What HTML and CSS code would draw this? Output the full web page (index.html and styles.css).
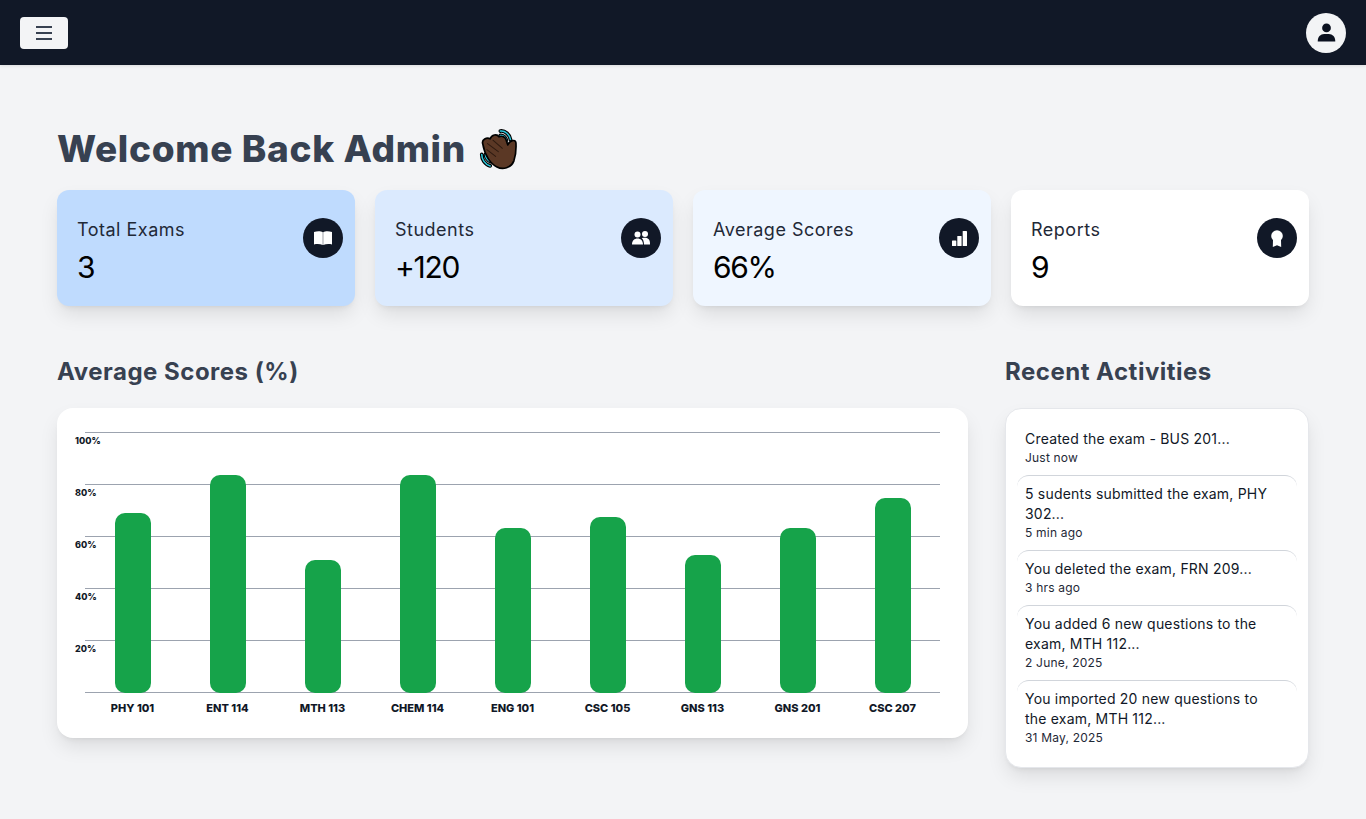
FILE: index.html
```html
<!DOCTYPE html>
<html lang="en">
<head>
<meta charset="utf-8">
<title>Dashboard</title>
<link rel="stylesheet" href="styles.css">
</head>
<body>
<header class="topbar">
  <button class="menu-btn" aria-label="Menu">
    <svg class="menu-icon" viewBox="0 0 16 14"><path d="M0 1h16M0 7h16M0 13h16"/></svg>
  </button>
  <div class="avatar">
    <svg class="avatar-icon" viewBox="0 0 20 20"><circle cx="10" cy="5.200" r="4.600"/><path d="M.8 19.500c-.3-5 3-8 6.700-8h5c3.700 0 7 3 6.700 8z"/></svg>
  </div>
</header>
<main class="page">
  <h1 class="welcome">Welcome Back Admin
    <svg class="wave" viewBox="55 25 115 130">
      <g fill="none" stroke-linecap="round">
        <path class="wave-o" d="M118 37C132 35 146 48 148 62M118 50C126 49 134 56 136 64M63 106C63 120 72 136 88 140M74 106C74 114 80 124 88 127"/>
        <path class="wave-c" d="M118 37C132 35 146 48 148 62M118 50C126 49 134 56 136 64M63 106C63 120 72 136 88 140M74 106C74 114 80 124 88 127"/>
      </g>
      <path class="wave-hand" d="M66 75C62 62 78 54 88 60C92 48 108 44 114 54C122 50 134 54 136 66L140 78C146 64 162 60 164 72C165 90 163 110 158 125C150 146 125 152 108 143C90 135 72 110 66 75Z"/>
      <path class="wave-line" d="M80 74L112 98M96 64L124 88M78 92L104 112"/>
    </svg>
  </h1>
  <section class="stats">
    <article class="stat stat-a">
      <div><p class="stat-label">Total Exams</p><p class="stat-value">3</p></div>
      <span class="stat-icon"><svg class="ico-book" viewBox="0 0 18 14"><path d="M0 1C3 0 6.800 0 8.800 1.200V14C6 12.800 3 12.800 0 13.400ZM18 1C15 0 11.200 0 9.200 1.200V14C12 12.800 15 12.800 18 13.400Z"/></svg></span>
    </article>
    <article class="stat stat-b">
      <div><p class="stat-label">Students</p><p class="stat-value">+120</p></div>
      <span class="stat-icon"><svg class="ico-users" viewBox="0 0 18 14"><circle cx="5.500" cy="3.500" r="3"/><circle cx="13" cy="3" r="3"/><path d="M0 13.500C0 9.500 2.500 7.500 5.500 7.500S11 9.500 11 13.500ZM12 13.500C12 10.500 11.200 8.500 9.800 7.300C11 6.700 15 6.200 17 8.500C18 10 18 12 18 13.500Z"/></svg></span>
    </article>
    <article class="stat stat-c">
      <div><p class="stat-label">Average Scores</p><p class="stat-value">66%</p></div>
      <span class="stat-icon"><svg class="ico-bars" viewBox="0 0 15 15"><rect y="9.500" width="4.300" height="5.500" rx=".6"/><rect x="5.300" y="5" width="4.300" height="10" rx=".6"/><rect x="10.700" width="4.300" height="15" rx=".6"/></svg></span>
    </article>
    <article class="stat stat-d">
      <div><p class="stat-label">Reports</p><p class="stat-value">9</p></div>
      <span class="stat-icon"><svg class="ico-award" viewBox="0 0 12 17"><circle cx="6" cy="6" r="5.800"/><path d="M2 10L1.800 17L6 15.200L10.200 17L10 10Z"/></svg></span>
    </article>
  </section>
  <section class="lower">
    <div class="scores">
      <h2 class="section-title">Average Scores (%)</h2>
      <div class="chart-card">
        <div class="plot">
          <div class="grid">
            <div class="grid-row"><span>100%</span></div>
            <div class="grid-row"><span>80%</span></div>
            <div class="grid-row"><span>60%</span></div>
            <div class="grid-row"><span>40%</span></div>
            <div class="grid-row"><span>20%</span></div>
          </div>
          <div class="bars">
            <div class="bar-col"><div class="bar" style="height:180px"></div></div>
            <div class="bar-col"><div class="bar" style="height:218px"></div></div>
            <div class="bar-col"><div class="bar" style="height:133px"></div></div>
            <div class="bar-col"><div class="bar" style="height:218px"></div></div>
            <div class="bar-col"><div class="bar" style="height:165px"></div></div>
            <div class="bar-col"><div class="bar" style="height:176px"></div></div>
            <div class="bar-col"><div class="bar" style="height:138px"></div></div>
            <div class="bar-col"><div class="bar" style="height:165px"></div></div>
            <div class="bar-col"><div class="bar" style="height:195px"></div></div>
          </div>
        </div>
        <div class="x-labels">
          <span>PHY 101</span><span>ENT 114</span><span>MTH 113</span><span>CHEM 114</span><span>ENG 101</span><span>CSC 105</span><span>GNS 113</span><span>GNS 201</span><span>CSC 207</span>
        </div>
      </div>
    </div>
    <aside class="recent">
      <h2 class="section-title">Recent Activities</h2>
      <div class="activity-card">
        <div class="activity first"><p class="activity-text">Created the exam - BUS 201...</p><p class="activity-time">Just now</p></div>
        <div class="activity"><p class="activity-text">5 sudents submitted the exam, PHY 302...</p><p class="activity-time">5 min ago</p></div>
        <div class="activity"><p class="activity-text">You deleted the exam, FRN 209...</p><p class="activity-time">3 hrs ago</p></div>
        <div class="activity"><p class="activity-text">You added 6 new questions to the exam, MTH 112...</p><p class="activity-time">2 June, 2025</p></div>
        <div class="activity"><p class="activity-text">You imported 20 new questions to the exam, MTH 112...</p><p class="activity-time">31 May, 2025</p></div>
      </div>
    </aside>
  </section>
</main>
</body>
</html>
```
FILE: styles.css
```css
* { box-sizing: border-box; }
html, body { margin: 0; padding: 0; }
body {
  background: #f3f4f6;
  font-family: "Inter", "Open Sans", sans-serif;
  color: #111827;
  height: 819px;
  overflow: hidden;
}
p, h1, h2 { margin: 0; }

.topbar {
  height: 65px;
  background: #111827;
  display: flex;
  align-items: center;
  justify-content: space-between;
  padding: 0 20px;
  box-shadow: 0 1px 3px rgba(0,0,0,.1);
}
.menu-btn {
  width: 48px;
  height: 32px;
  border: 0;
  padding: 0;
  border-radius: 4px;
  background: #f3f4f6;
  display: flex;
  align-items: center;
  justify-content: center;
}
.menu-icon { width: 16px; height: 14px; fill: none; stroke: #374151; stroke-width: 2; }
.avatar {
  width: 40px;
  height: 40px;
  border-radius: 50%;
  background: #f3f4f6;
  display: flex;
  align-items: center;
  justify-content: center;
}
.avatar-icon { width: 19px; height: 19px; fill: #0b1120; }

.page { padding: 64px 57px 0; }
.welcome {
  height: 40px;
  font-size: 37px;
  line-height: 40px;
  font-weight: 800;
  color: #374151;
  display: flex;
  align-items: center;
  gap: 13px;
  margin-bottom: 21px;
  letter-spacing: 0.65px;
}
.wave { width: 39px; height: 44px; flex: none; }
.wave-o { stroke: #000; stroke-width: 11; }
.wave-c { stroke: #2cc9de; stroke-width: 4.500; }
.wave-hand { fill: #5b3825; stroke: #000; stroke-width: 5; stroke-linejoin: round; }
.wave-line { fill: none; stroke: #2e1a10; stroke-width: 3; stroke-linecap: round; }

.stats { display: grid; grid-template-columns: repeat(4, 1fr); gap: 20px; }
.stat {
  height: 116px;
  border-radius: 12px;
  padding: 28px 12px 0 20px;
  display: flex;
  justify-content: space-between;
  align-items: flex-start;
  box-shadow: 0 10px 20px -2px rgba(0,0,0,.1), 0 4px 6px -4px rgba(0,0,0,.1);
}
.stat-a { background: #bfdbfe; }
.stat-b { background: #dbeafe; }
.stat-c { background: #eff6ff; }
.stat-d { background: #fff; }
.stat-label { font-size: 18px; line-height: 24px; color: #1f2937; letter-spacing: .5px; }
.stat-value { font-size: 30px; line-height: 40px; margin-top: 5px; color: #000; letter-spacing: -1.300px; }
.stat-icon {
  width: 40px;
  height: 40px;
  border-radius: 50%;
  background: #111827;
  display: flex;
  align-items: center;
  justify-content: center;
  flex: none;
}
.stat-icon svg { fill: #fff; }
.ico-book { width: 18px; height: 14px; }
.ico-users { width: 18px; height: 14px; }
.ico-bars { width: 15px; height: 15px; }
.ico-award { width: 12px; height: 17px; }

.lower { display: flex; justify-content: space-between; margin-top: 49px; }
.scores { width: 911px; }
.recent { width: 304px; }
.section-title {
  font-size: 24px;
  line-height: 34px;
  font-weight: 700;
  color: #374151;
  margin-bottom: 19px;
  letter-spacing: .5px;
}
.chart-card {
  height: 330px;
  background: #fff;
  border-radius: 16px;
  padding: 24px 28px 0;
  box-shadow: 0 10px 20px -2px rgba(0,0,0,.1), 0 4px 6px -4px rgba(0,0,0,.1);
}
.plot {
  position: relative;
  height: 261px;
  border-bottom: 1px solid #9ca3af;
}
.grid-row {
  height: 52px;
  border-top: 1px solid #9ca3af;
  position: relative;
}
.grid-row span {
  position: absolute;
  left: -10px;
  top: 2px;
  font-size: 9px;
  line-height: 12px;
  font-weight: 800;
  color: #111827;
}
.bars {
  position: absolute;
  inset: 0 0 -1px 0;
  display: flex;
  align-items: flex-end;
}
.bar-col { flex: 1; display: flex; justify-content: center; }
.bar { width: 36px; background: #16a34a; border-radius: 10px; }
.x-labels { display: flex; margin-top: 7px; }
.x-labels span {
  flex: 1;
  text-align: center;
  font-size: 11px;
  line-height: 16px;
  font-weight: 800;
  color: #111827;
}

.activity-card {
  height: 360px;
  background: #fff;
  border: 1px solid #e5e7eb;
  border-radius: 16px;
  padding: 11px;
  box-shadow: 0 10px 20px -2px rgba(0,0,0,.1), 0 4px 6px -4px rgba(0,0,0,.1);
}
.activity {
  padding: 8px 24px 9px 8px;
  border-top: 1px solid #d1d5db;
  border-radius: 12px 12px 0 0;
}
.activity.first { border-top-color: transparent; }
.activity-text { font-size: 14px; line-height: 20px; color: #111827; letter-spacing: .2px; }
.activity-time { font-size: 12px; line-height: 16px; color: #1f2937; margin-top: 1px; letter-spacing: .2px; }
```
